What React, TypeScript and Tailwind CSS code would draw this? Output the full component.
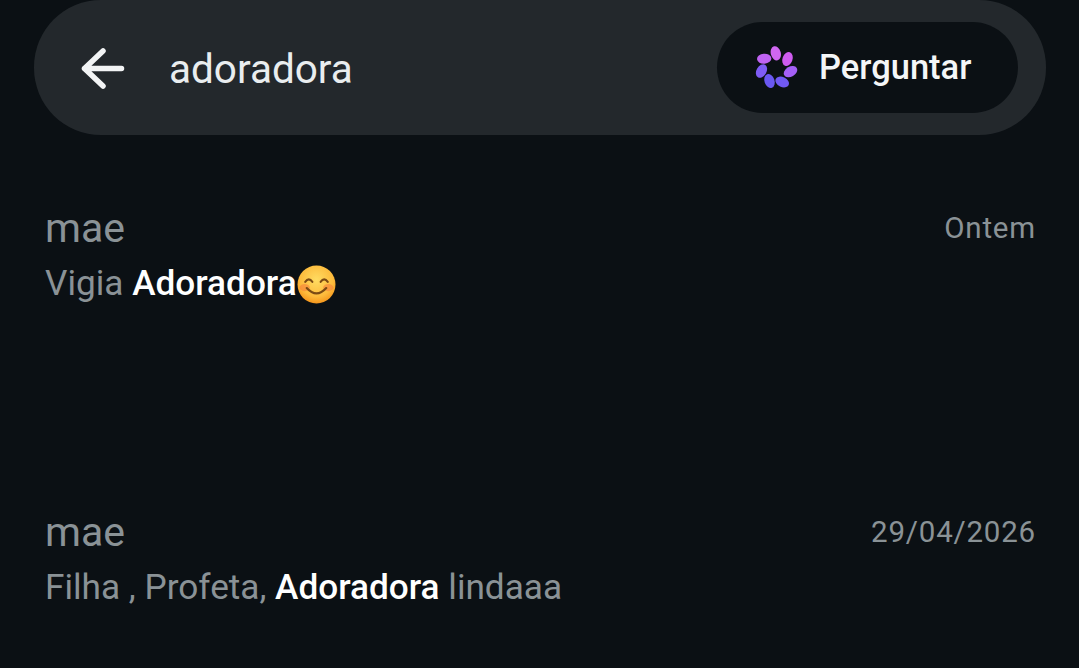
const petals = [
  { x: 36.3, y: 22.3, r: 75, c: "#d067f2" },
  { x: 48, y: 28, r: 110, c: "#cf5cf0" },
  { x: 51, y: 40.7, r: 150, c: "#a45ff6" },
  { x: 42.7, y: 51, r: 25, c: "#7059f3" },
  { x: 30, y: 50, r: 70, c: "#6a58f1" },
  { x: 22, y: 40, r: 120, c: "#7f5cf5" },
  { x: 24.7, y: 27.7, r: 175, c: "#c063f3" },
];

function AskIcon() {
  return (
    <svg width="44" height="44" viewBox="14.5 15 44 44" className="shrink-0">
      {petals.map((p) => (
        <ellipse key={p.r} cx={p.x} cy={p.y} rx="7.200" ry="5" fill={p.c} transform={`rotate(${p.r} ${p.x} ${p.y})`} />
      ))}
    </svg>
  );
}

function SmileEmoji() {
  return (
    <svg width="39" height="39" viewBox="0 0 38 38" className="shrink-0">
      <defs>
        <radialGradient id="face" cx="50%" cy="38%" r="62%">
          <stop offset="0%" stopColor="#ffdc62" />
          <stop offset="70%" stopColor="#fdbb3c" />
          <stop offset="100%" stopColor="#f5961c" />
        </radialGradient>
      </defs>
      <circle cx="19" cy="19" r="18.5" fill="url(#face)" />
      <ellipse cx="7.5" cy="22" rx="5" ry="3.5" fill="#f5803c" opacity="0.6" />
      <ellipse cx="30.5" cy="22" rx="5" ry="3.500" fill="#f5803c" opacity="0.6" />
      <path d="M8 16.500 Q11.500 11.500 15 16.500 M23 16.500 Q26.500 11.500 30 16.500" fill="none" stroke="#7a4a14" strokeWidth="2" strokeLinecap="round" />
      <path d="M9.500 22.500 Q19 33 28.500 22.500" fill="none" stroke="#7a4a14" strokeWidth="2.200" strokeLinecap="round" />
    </svg>
  );
}

export default function App() {
  return (
    <div className="w-[1079px] h-[668px] overflow-hidden bg-[#0b1014] font-['Roboto',sans-serif]">
      {/* search bar */}
      <div className="pl-[34px] pr-[33px]">
        <div className="h-[135px] rounded-[67px] bg-[#23282c] flex items-center pl-[44px] pr-[28px]">
          <svg width="50" height="50" viewBox="0 0 50 50" fill="none" stroke="#f2f4f5" strokeWidth="5.500" strokeLinecap="round" strokeLinejoin="round" className="shrink-0">
            <path d="M43.500 25.500H6.500M25 8L6.500 25.500L25 43" />
          </svg>
          <span className="ml-[41px] text-[40.500px] text-[#e9edef] leading-none pt-[4px]">adoradora</span>
          <div className="ml-auto w-[301px] h-[91px] rounded-[46px] bg-[#0b1014] flex items-center pl-[37px] gap-[21px]">
            <AskIcon />
            <span className="text-[34.500px] font-medium text-[#f4f6f7] leading-none">Perguntar</span>
          </div>
        </div>
      </div>

      {/* results */}
      <div className="pl-[45px] pr-[43px] pt-[69px] flex flex-col gap-[177px]">
        <div className="h-[127px]">
          <div className="flex items-center justify-between h-[48px]">
            <span className="text-[41px] text-[#8a9296] leading-none">mae</span>
            <span className="text-[29.500px] tracking-[0.800px] text-[#8a9296] leading-none pt-[2px]">Ontem</span>
          </div>
          <div className="flex items-center h-[46px] mt-[9px] text-[35.200px] leading-none text-[#8a9296]">
            <span className="whitespace-pre">Vigia </span>
            <span className="font-medium text-white">Adoradora</span>
            <SmileEmoji />
          </div>
        </div>
        <div className="h-[127px]">
          <div className="flex items-center justify-between h-[48px]">
            <span className="text-[41px] text-[#8a9296] leading-none">mae</span>
            <span className="text-[29.500px] tracking-[0.800px] text-[#8a9296] leading-none pt-[2px]">29/04/2026</span>
          </div>
          <div className="flex items-center h-[46px] mt-[9px] text-[35.200px] leading-none text-[#8a9296]">
            <span className="whitespace-pre">Filha , Profeta, </span>
            <span className="font-medium text-white whitespace-pre">Adoradora </span>
            <span>lindaaa</span>
          </div>
        </div>
      </div>
    </div>
  );
}
